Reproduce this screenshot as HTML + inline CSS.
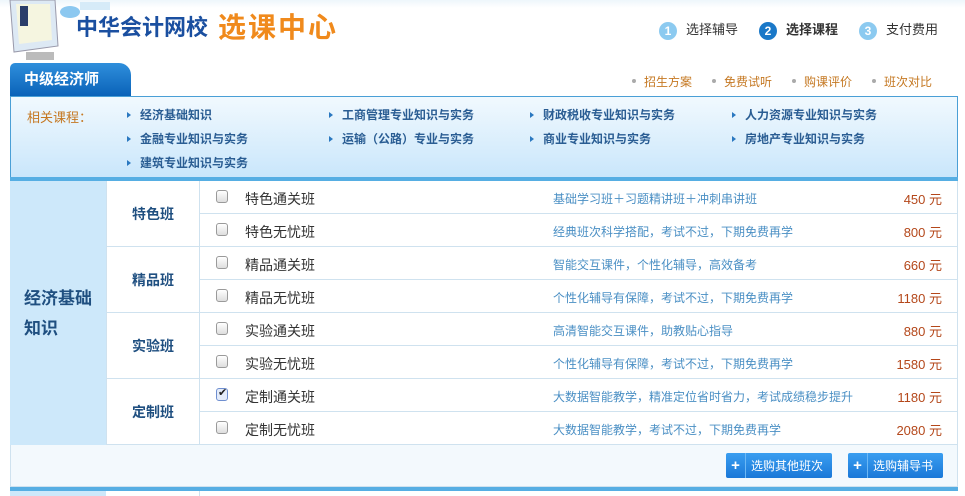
<!DOCTYPE html>
<html><head><meta charset="utf-8"><style>
*{margin:0;padding:0;box-sizing:border-box}
body{width:965px;height:496px;overflow:hidden;background:#fff;font-family:"Liberation Sans","Noto Sans CJK SC",sans-serif;font-size:12px;position:relative}
.a{position:absolute;white-space:nowrap}
.hdr{left:0;top:0;width:965px;height:8px;background:linear-gradient(#eef6fb,#fff)}
.logo1{left:76px;top:10px;font-size:22px;font-weight:bold;color:#1a4fa0}
.logo2{left:218px;top:6px;font-size:28px;font-weight:bold;color:#f08a1c;letter-spacing:2px}
.step{top:19px;font-size:13px;color:#333}
.num{display:inline-block;width:18px;height:18px;border-radius:50%;color:#fff;font-size:12px;text-align:center;line-height:18px;font-weight:bold;margin-right:9px;vertical-align:-1px}
.tab{left:10px;top:63px;width:121px;height:33px;background:linear-gradient(#2f8fdc,#0a62b8);border-radius:5px 12px 0 0;color:#fff;font-weight:bold;font-size:15px;line-height:33px;padding-left:14px}
.lnk{top:73px;color:#c57822;font-size:12px}
.lnk:before{content:"";display:inline-block;width:4px;height:4px;border-radius:50%;background:#aaa;margin-right:8px;vertical-align:3px}
.panel{left:10px;top:96px;width:948px;height:82px;border:1px solid #4a9fd6;border-bottom:none;background:linear-gradient(#f1f9fe,#c9e6fb)}
.rc{color:#c57822;font-size:13px;left:27px;top:107px}
.cl{color:#2a5d93;font-weight:bold;font-size:12px}
.cl:before{content:"";display:inline-block;border-left:4px solid #2a78c0;border-top:3px solid transparent;border-bottom:3px solid transparent;margin-right:9px;vertical-align:1px}
.tb{left:10px;top:177px;width:948px;height:4px;background:#56aee3}
.left{left:10px;top:181px;width:96px;height:264px;background:#cde8fa}
.grp{left:106px;width:93px;height:66px;border-left:1px solid #cfe2ef;border-bottom:1px solid #cfe2ef;color:#1f4f80;font-weight:bold;font-size:14px;text-align:center;line-height:66px}
.row{left:199px;width:759px;height:33px;border-left:1px solid #cfe2ef;border-bottom:1px solid #cfe2ef;border-right:1px solid #cfe2ef}
.cb{position:absolute;left:16px;top:9px;width:12px;height:13px;border:1px solid #9a9a9a;border-radius:3px;background:linear-gradient(#fff,#ddd)}
.nm{position:absolute;left:45px;top:8px;font-size:14px;color:#333}
.ds{position:absolute;left:353px;top:9px;font-size:12px;color:#4a8fc4}
.pr{position:absolute;right:15px;top:8px;font-size:13px;color:#b4471a}
.foot{left:10px;top:445px;width:948px;height:42px;background:#f3f9fd;border:1px solid #cfe2ef;border-top:none}
.btn{top:453px;height:25px;background:linear-gradient(#3a9ef0,#1a78d8);border-radius:2px;color:#fff;font-size:12px;line-height:25px}
.btn b{display:inline-block;width:20px;text-align:center;border-right:1px solid #6cb8f5;margin-right:5px;font-size:15px}
.tb2{left:10px;top:487px;width:948px;height:4px;background:#56aee3}
</style></head><body>
<div class="a hdr"></div>
<svg class="a" style="left:0;top:0" width="120" height="62"><polygon points="10,0 55,0 58,46 14,52" fill="#dde9f4" stroke="#99a"/><polygon points="16,4 50,4 52,40 19,44" fill="#f5f5e0"/><rect x="20" y="6" width="8" height="20" fill="#2a3d6a"/><rect x="26" y="52" width="28" height="8" fill="#bbb"/><ellipse cx="70" cy="12" rx="10" ry="6" fill="#8cc8f0"/><rect x="80" y="2" width="30" height="8" fill="#d6ebf8"/></svg>
<div class="a logo1">中华会计网校</div>
<div class="a logo2">选课中心</div>
<div class="a step" style="left:659px"><span class="num" style="background:#8ccaf0">1</span>选择辅导</div>
<div class="a step" style="left:759px;font-weight:bold"><span class="num" style="background:#1a78c8">2</span>选择课程</div>
<div class="a step" style="left:859px"><span class="num" style="background:#8ccaf0">3</span>支付费用</div>
<div class="a tab">中级经济师</div>
<div class="a lnk" style="left:632px">招生方案</div>
<div class="a lnk" style="left:712px">免费试听</div>
<div class="a lnk" style="left:792px">购课评价</div>
<div class="a lnk" style="left:872px">班次对比</div>
<div class="a panel"></div>
<div class="a rc">相关课程：</div>
<div class="a cl" style="left:127px;top:106px">经济基础知识</div>
<div class="a cl" style="left:329px;top:106px">工商管理专业知识与实务</div>
<div class="a cl" style="left:530px;top:106px">财政税收专业知识与实务</div>
<div class="a cl" style="left:732px;top:106px">人力资源专业知识与实务</div>
<div class="a cl" style="left:127px;top:130px">金融专业知识与实务</div>
<div class="a cl" style="left:329px;top:130px">运输（公路）专业与实务</div>
<div class="a cl" style="left:530px;top:130px">商业专业知识与实务</div>
<div class="a cl" style="left:732px;top:130px">房地产专业知识与实务</div>
<div class="a cl" style="left:127px;top:154px">建筑专业知识与实务</div>
<div class="a tb"></div>
<div class="a left"></div>
<div class="a" style="left:24px;top:284px;font-size:17px;font-weight:bold;color:#1f4f80;line-height:30px;white-space:normal;width:80px">经济基础<br>知识</div>
<div class="a grp" style="top:181px">特色班</div>
<div class="a grp" style="top:247px">精品班</div>
<div class="a grp" style="top:313px">实验班</div>
<div class="a grp" style="top:379px">定制班</div>
<div class="a row" style="top:181px"><i class="cb"></i><span class="nm">特色通关班</span><span class="ds">基础学习班＋习题精讲班＋冲刺串讲班</span><span class="pr">450 元</span></div>
<div class="a row" style="top:214px"><i class="cb"></i><span class="nm">特色无忧班</span><span class="ds">经典班次科学搭配，考试不过，下期免费再学</span><span class="pr">800 元</span></div>
<div class="a row" style="top:247px"><i class="cb"></i><span class="nm">精品通关班</span><span class="ds">智能交互课件，个性化辅导，高效备考</span><span class="pr">660 元</span></div>
<div class="a row" style="top:280px"><i class="cb"></i><span class="nm">精品无忧班</span><span class="ds">个性化辅导有保障，考试不过，下期免费再学</span><span class="pr">1180 元</span></div>
<div class="a row" style="top:313px"><i class="cb"></i><span class="nm">实验通关班</span><span class="ds">高清智能交互课件，助教贴心指导</span><span class="pr">880 元</span></div>
<div class="a row" style="top:346px"><i class="cb"></i><span class="nm">实验无忧班</span><span class="ds">个性化辅导有保障，考试不过，下期免费再学</span><span class="pr">1580 元</span></div>
<div class="a row" style="top:379px"><i class="cb" style="border-color:#6f8fd0;background:#e4ecfa"></i><span class="a" style="left:18px;top:7px;font-size:11px;color:#222">✔</span><span class="nm">定制通关班</span><span class="ds">大数据智能教学，精准定位省时省力，考试成绩稳步提升</span><span class="pr">1180 元</span></div>
<div class="a row" style="top:412px"><i class="cb"></i><span class="nm">定制无忧班</span><span class="ds">大数据智能教学，考试不过，下期免费再学</span><span class="pr">2080 元</span></div>
<div class="a foot"></div>
<div class="a btn" style="left:726px;width:106px"><b>+</b>选购其他班次</div>
<div class="a btn" style="left:848px;width:95px"><b>+</b>选购辅导书</div>
<div class="a tb2"></div>
<div class="a" style="left:10px;top:491px;width:96px;height:5px;background:#cde8fa"></div>
<div class="a" style="left:199px;top:491px;width:1px;height:5px;background:#cfe2ef"></div>
</body></html>
